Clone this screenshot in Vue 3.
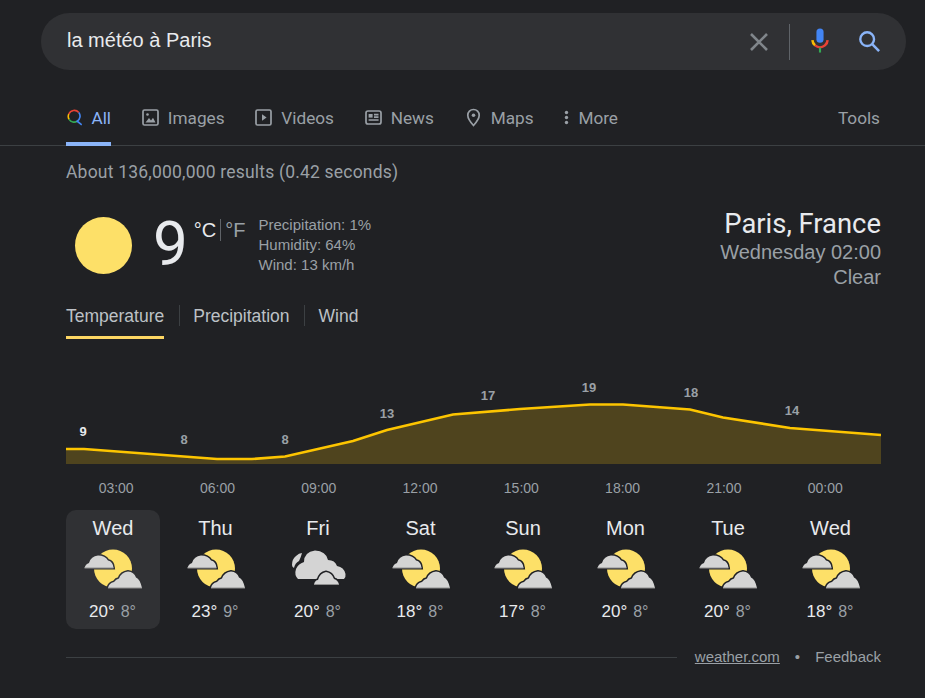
<script setup>
const tabs = [
  { label: 'Images', icon: 'images' },
  { label: 'Videos', icon: 'videos' },
  { label: 'News', icon: 'news' },
  { label: 'Maps', icon: 'maps' },
  { label: 'More', icon: 'more' },
]
const pts = [[66,449],[84,449],[217,459],[252,459],[285,456.5],[353,441],[387,430],[453,414.5],[520,409],[590,404.5],[623,404.5],[690,409.5],[723,417.5],[790,428],[881,435]]
const linePts = pts.map(p => [p[0]-66, p[1]-370].join(',')).join(' ')
const areaPts = `0,94 ${linePts} 815,94`
const labels = [
  { x: 17, y: 66, t: '9', active: true },
  { x: 118, y: 74, t: '8' },
  { x: 219, y: 74, t: '8' },
  { x: 321, y: 48, t: '13' },
  { x: 422, y: 30, t: '17' },
  { x: 523, y: 22, t: '19' },
  { x: 625, y: 27, t: '18' },
  { x: 726, y: 45, t: '14' },
]
const times = ['03:00','06:00','09:00','12:00','15:00','18:00','21:00','00:00']
const days = [
  { d:'Wed', hi:20, lo:8, kind:'sun', active:true },
  { d:'Thu', hi:23, lo:9, kind:'sun' },
  { d:'Fri', hi:20, lo:8, kind:'cloud' },
  { d:'Sat', hi:18, lo:8, kind:'sun' },
  { d:'Sun', hi:17, lo:8, kind:'sun' },
  { d:'Mon', hi:20, lo:8, kind:'sun' },
  { d:'Tue', hi:20, lo:8, kind:'sun' },
  { d:'Wed', hi:18, lo:8, kind:'sun' },
]
</script>

<template>
  <div class="page">
    <div class="search">
      <span class="query">la météo à Paris</span>
      <svg class="x" viewBox="0 0 18 18" width="18" height="18"><path d="M1 1L17 17M17 1L1 17" stroke="#80868b" stroke-width="2.6" fill="none"/></svg>
      <span class="divider"></span>
      <svg class="mic" viewBox="0 0 20 28" width="18" height="25">
        <rect x="6" y="0.5" width="8" height="16" rx="4" fill="#4285f4"/>
        <path d="M1.5 13.5a8.5 8.5 0 0 0 3 6" stroke="#fbbc04" stroke-width="2.8" fill="none"/>
        <path d="M4.5 19.5a8.5 8.5 0 0 0 11 0a8.5 8.5 0 0 0 3-6" stroke="#ea4335" stroke-width="2.8" fill="none"/>
        <rect x="8.8" y="22" width="2.4" height="5.5" fill="#34a853"/>
      </svg>
      <svg class="mag" viewBox="0 0 24 24" width="22" height="22"><circle cx="10" cy="10" r="7.5" stroke="#8ab4f8" stroke-width="2.6" fill="none"/><path d="M15.500 15.500L23 23" stroke="#8ab4f8" stroke-width="2.8" fill="none"/></svg>
    </div>

    <nav class="nav">
      <a class="tab tab-on">
        <svg class="all-ic" viewBox="0 0 17 17" width="17" height="17">
          <path d="M2 4.6A6.6 6.6 0 0 1 13 3" stroke="#ea4335" stroke-width="1.8" fill="none"/>
          <path d="M2 4.6A6.6 6.6 0 0 0 2.3 10.6" stroke="#fbbc04" stroke-width="1.8" fill="none"/>
          <path d="M2.3 10.6A6.6 6.6 0 0 0 11.3 12.6" stroke="#34a853" stroke-width="1.8" fill="none"/>
          <path d="M13 3A6.6 6.6 0 0 1 11.3 12.6L16.3 16.6" stroke="#4285f4" stroke-width="1.8" fill="none"/>
        </svg>
        <span>All</span>
      </a>
      <a v-for="t in tabs" :key="t.label" class="tab">
        <svg v-if="t.icon === 'images'" viewBox="0 0 17 17" width="17" height="17"><rect x="1" y="1" width="15" height="15" rx="1.5" class="ln"/><circle cx="5.5" cy="5.5" r="1.3" class="fl"/><path d="M3.5 13.5L7 9l2 2.4 2-2.6 2.5 4.7z" class="fl"/></svg>
        <svg v-else-if="t.icon === 'videos'" viewBox="0 0 17 17" width="17" height="17"><rect x="1" y="1" width="15" height="15" rx="1.5" class="ln"/><path d="M7 5.2L11.6 8.5 7 11.8z" class="fl"/></svg>
        <svg v-else-if="t.icon === 'news'" viewBox="0 0 17 17" width="17" height="17"><rect x="1" y="2" width="15" height="13" rx="2" class="ln"/><rect x="3.6" y="5" width="4" height="3.6" class="fl"/><path d="M9 5.7h4.5M9 8.2h4.5M3.6 11h10" class="ln"/></svg>
        <svg v-else-if="t.icon === 'maps'" viewBox="0 0 17 20" width="17" height="20"><path d="M8.5 1.5a5.7 5.7 0 0 0-5.7 5.8c0 4 5.7 10.2 5.7 10.2s5.7-6.200 5.700-10.200a5.700 5.700 0 0 0-5.700-5.800z" class="ln"/><circle cx="8.500" cy="7.300" r="1.800" class="fl"/></svg>
        <svg v-else viewBox="0 0 5 15" width="5" height="15"><circle cx="2.500" cy="2.500" r="1.700" class="fl"/><circle cx="2.500" cy="7.500" r="1.700" class="fl"/><circle cx="2.500" cy="12.500" r="1.700" class="fl"/></svg>
        <span>{{ t.label }}</span>
      </a>
      <a class="tab tools">Tools</a>
    </nav>

    <main class="content">
      <p class="stats">About 136,000,000 results (0.42 seconds)</p>

      <section class="now">
        <div class="now-left">
          <span class="sun"></span>
          <span class="temp">9</span>
          <span class="units"><b>°C</b><i></i><em>°F</em></span>
          <ul class="facts">
            <li>Precipitation: 1%</li>
            <li>Humidity: 64%</li>
            <li>Wind: 13 km/h</li>
          </ul>
        </div>
        <div class="now-right">
          <h1>Paris, France</h1>
          <p>Wednesday 02:00</p>
          <p>Clear</p>
        </div>
      </section>

      <div class="modes">
        <span class="mode mode-on">Temperature</span>
        <span class="mode">Precipitation</span>
        <span class="mode">Wind</span>
      </div>

      <svg class="chart" viewBox="0 0 815 94" width="815" height="94">
        <polygon :points="areaPts" fill="#4f441e"/>
        <polyline :points="linePts" fill="none" stroke="#fdc500" stroke-width="2.600"/>
        <text v-for="l in labels" :key="l.t + l.x" :x="l.x" :y="l.y" text-anchor="middle" class="lbl" :class="{ 'lbl-on': l.active }">{{ l.t }}</text>
      </svg>

      <div class="times">
        <span v-for="t in times" :key="t">{{ t }}</span>
      </div>

      <div class="days">
        <div v-for="(d, i) in days" :key="i" class="day" :class="{ 'day-on': d.active }">
          <div class="day-name">{{ d.d }}</div>
          <svg v-if="d.kind === 'sun'" class="wx" viewBox="0 0 58 40" width="58" height="40">
            <circle cx="29" cy="19.500" r="19" fill="#fde068"/>
            <path class="cl" d="M0.500 19Q1.500 15 5 14Q7 7 14 6.500Q21 6.500 24 11.500Q29 12.500 29.500 19Z"/>
            <path class="ed" d="M0.500 19H29.500"/>
            <path class="cl" d="M24 39Q25 34 30 33Q32 30 35 29.500Q37 23.500 44 22.500Q50 23 52 28.500Q56 30 58 39Z"/>
            <path class="ed" d="M24 39H58"/>
          </svg>
          <svg v-else class="wx" viewBox="0 0 58 40" width="58" height="40">
            <path d="M3 16Q3 10 7 7Q10 4 13 4Q12 8 10 12Q6 14 5 19Q3 18 3 16Z" fill="#d4d4d4"/>
            <path d="M9 30Q5 26 7 20Q9 15 15 13Q15 3 26 1.500Q37 2 39 11Q46 11 48 17Q55 18 56.500 25Q57 28 55 30Z" fill="#d4d4d4"/>
            <path class="cl" d="M25 35.500Q26 31 29 31Q31 24 37 23Q43 24 45 30Q49 31 50 35.500Z"/>
            <path class="ed" d="M25 35.500H50"/>
          </svg>
          <div class="day-t"><span class="hi">{{ d.hi }}°</span><span class="lo">{{ d.lo }}°</span></div>
        </div>
      </div>

      <footer class="foot">
        <span class="rule"></span>
        <a class="src">weather.com</a>
        <span class="dot">•</span>
        <a class="fb">Feedback</a>
      </footer>
    </main>
  </div>
</template>

<style>
html, body { margin: 0; background: #202124; }
</style>

<style scoped>
.page { width: 925px; height: 698px; overflow: hidden; background: #202124; font-family: "Liberation Sans", Arial, sans-serif; color: #e8eaed; }
.search { margin: 13px 19px 0 41px; height: 57px; border-radius: 29px; background: #303134; display: flex; align-items: center; padding: 0 26px; box-sizing: border-box; }
.query { font-size: 20px; color: #e8eaed; flex: 1; margin-top: -3px; }
.x { margin-right: 21px; margin-top: 1px; }
.divider { width: 1px; height: 36px; background: #5f6368; margin-right: 21px; }
.mic { margin-right: 29px; margin-top: -2px; }
.mag { margin-top: -1px; }

.nav { margin-top: 30px; height: 46px; box-sizing: border-box; border-bottom: 1px solid #3c4043; padding: 0 45px 0 66px; display: flex; gap: 30.800px; font-family: Roboto, sans-serif; font-size: 17.200px; color: #9aa0a6; }
.tab { display: inline-flex; align-items: center; gap: 9px; height: 46px; box-sizing: border-box; padding-bottom: 11px; }
.tab-on { color: #8ab4f8; border-bottom: 4px solid #8ab4f8; padding-bottom: 7px; width: 45px; }
.all-ic { margin-left: 1px; }
.tools { margin-left: auto; }
.ln { fill: none; stroke: #9aa0a6; stroke-width: 1.700; }
.fl { fill: #9aa0a6; }

.content { padding: 0 44px 0 66px; }
.stats { margin: 15px 0 0; font-family: Roboto, sans-serif; font-size: 17.500px; letter-spacing: 0.2px; line-height: 22px; color: #9aa0a6; }

.now { display: flex; justify-content: space-between; margin-top: 24px; height: 84px; }
.now-left { display: flex; align-items: flex-start; }
.sun { width: 57px; height: 57px; border-radius: 50%; background: #fde068; margin: 10px 0 0 9px; }
.temp { font-family: Roboto, sans-serif; font-size: 62px; font-weight: 400; line-height: 74px; margin-left: 21px; color: #e8eaed; }
.units { display: flex; align-items: center; margin: 11px 0 0 6px; font-size: 20px; line-height: 24px; }
.units b { font-weight: 400; color: #e8eaed; }
.units i { width: 1px; height: 22px; background: #5f6368; margin: 0 4px; }
.units em { font-style: normal; color: #9aa0a6; }
.facts { list-style: none; margin: 8px 0 0 13px; padding: 0; font-size: 15px; line-height: 20px; color: #9aa0a6; }
.now-right { text-align: right; padding-top: 1px; }
.now-right h1 { margin: 0; font-family: Roboto, sans-serif; font-size: 27.400px; font-weight: 400; line-height: 32px; color: #e8eaed; }
.now-right p { margin: 0; font-size: 20px; line-height: 25px; color: #9aa0a6; }

.modes { display: flex; margin-top: 13px; font-size: 17.500px; color: #bdc1c6; }
.mode { height: 35px; box-sizing: border-box; line-height: 24px; padding: 0 14.500px; position: relative; }
.mode + .mode::before { content: ""; position: absolute; left: 0; top: 1px; height: 21px; width: 1px; background: #3c4043; }
.mode-on::after { content: ""; position: absolute; left: 0; right: 0; bottom: 0; height: 3px; background: #fdd663; }
.mode:first-child { padding: 0; margin-right: 14.500px; }

.chart { display: block; margin-top: 31px; }
.lbl { font-family: "Liberation Sans", sans-serif; font-size: 13px; font-weight: 700; fill: #9aa0a6; }
.lbl-on { fill: #e8eaed; }

.times { display: grid; grid-template-columns: repeat(8, 101.300px); margin: 15px 0 0 -0.500px; font-size: 14px; line-height: 18px; color: #9aa0a6; text-align: center; }

.days { display: grid; grid-template-columns: repeat(8, 94px); column-gap: 8.500px; margin-top: 13px; }
.day { --wx-bg: #202124; height: 119px; border-radius: 10px; text-align: center; box-sizing: border-box; padding-top: 6px; }
.day-on { --wx-bg: #303134; background: #303134; }
.day-name { font-size: 20px; line-height: 24px; color: #e8eaed; }
.wx { display: block; margin: 9px auto 0 18px; overflow: visible; }
.cl { fill: #d4d4d4; stroke: var(--wx-bg); stroke-width: 3; paint-order: stroke; }
.ed { stroke: #8f8f8f; stroke-width: 1; fill: none; }
.day-t { margin-top: 13px; padding-right: 1px; font-size: 16px; line-height: 20px; }
.hi { color: #e8eaed; font-size: 17px; margin-right: 6px; }
.lo { color: #9aa0a6; }

.foot { display: flex; align-items: center; margin-top: 19px; font-size: 15px; line-height: 18px; color: #9aa0a6; }
.rule { flex: 1; height: 1px; background: #3c4043; margin-right: 18px; }
.src { text-decoration: underline; }
.dot { margin: 0 15px; }
</style>
